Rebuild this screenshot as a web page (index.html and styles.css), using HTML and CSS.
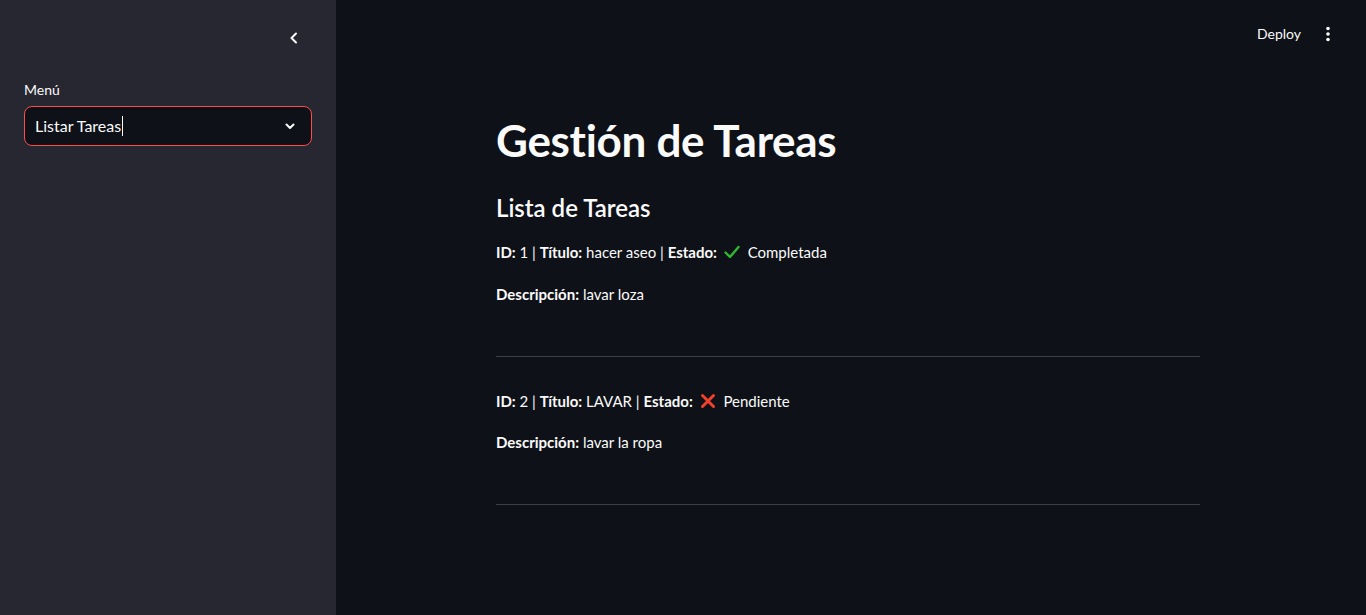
FILE: index.html
```html
<!DOCTYPE html>
<html lang="es">
<head>
<meta charset="utf-8">
<title>Gestión de Tareas</title>
<link rel="stylesheet" href="styles.css">
</head>
<body>
<div class="app">
  <aside class="sidebar">
    <div class="sidebar-top">
      <button class="collapse" aria-label="Cerrar barra lateral">
        <svg width="16" height="16" viewBox="0 0 16 16"><path d="M10 3.5 5.5 8l4.5 4.5" fill="none" stroke="#fafafa" stroke-width="2" stroke-linecap="round" stroke-linejoin="round"/></svg>
      </button>
    </div>
    <div class="field">
      <label class="field-label">Menú</label>
      <div class="select">
        <span class="select-value">Listar Tareas</span><span class="caret"></span>
        <svg class="select-arrow" width="14" height="14" viewBox="0 0 14 14"><path d="M3.5 5.5 7 9l3.5-3.5" fill="none" stroke="#fafafa" stroke-width="2" stroke-linecap="round" stroke-linejoin="round"/></svg>
      </div>
    </div>
  </aside>
  <main class="main">
    <header class="topbar">
      <span class="deploy">Deploy</span>
      <svg class="kebab" width="6" height="16" viewBox="0 0 6 16"><circle cx="3" cy="2.5" r="1.8" fill="#fafafa"/><circle cx="3" cy="8" r="1.8" fill="#fafafa"/><circle cx="3" cy="13.5" r="1.8" fill="#fafafa"/></svg>
    </header>
    <section class="content">
      <h1 class="title">Gestión de Tareas</h1>
      <h2 class="subtitle">Lista de Tareas</h2>

      <p class="line"><b>ID:</b> 1 | <b>Título:</b> hacer aseo | <b>Estado:</b> <svg class="icon" width="16" height="16" viewBox="0 0 16 16"><path d="M1.5 8.5 6 13 14.5 3" fill="none" stroke="#2fb82f" stroke-width="2.4" stroke-linecap="round" stroke-linejoin="round"/></svg> Completada</p>
      <p class="line"><b>Descripción:</b> lavar loza</p>
      <hr class="divider">

      <p class="line"><b>ID:</b> 2 | <b>Título:</b> LAVAR | <b>Estado:</b> <svg class="icon" width="16" height="16" viewBox="0 0 16 16"><path d="M2.5 2.5 13.5 13.5M13.5 2.5 2.5 13.5" fill="none" stroke="#f0412a" stroke-width="3" stroke-linecap="round"/></svg> Pendiente</p>
      <p class="line line-tight"><b>Descripción:</b> lavar la ropa</p>
      <hr class="divider">
    </section>
  </main>
</div>
</body>
</html>
```

FILE: styles.css
```css
* { box-sizing: border-box; }
html, body { margin: 0; padding: 0; height: 100%; }
body {
  font-family: Lato, "Noto Sans", "Liberation Sans", sans-serif;
  color: #fafafa;
  background: #0e1117;
  overflow: hidden;
}
.app { display: flex; height: 615px; }

.sidebar {
  width: 336px;
  flex-shrink: 0;
  background: #262730;
  padding: 0 24px;
}
.sidebar-top {
  height: 76px;
  display: flex;
  justify-content: flex-end;
  align-items: flex-start;
  padding-top: 30px;
  padding-right: 10px;
}
.collapse {
  background: none; border: 0; padding: 0; width: 16px; height: 16px;
  display: flex;
}
.field-label {
  display: block;
  font-size: 14px;
  line-height: 20px;
  height: 30px;
  padding-top: 4px;
}
.select {
  height: 40px;
  border: 1px solid #ff4b4b;
  border-radius: 8px;
  background: #0e1117;
  display: flex;
  align-items: center;
  padding: 0 14px 0 10px;
  font-size: 16px;
}
.select-value { line-height: 20px; }
.caret {
  display: inline-block;
  width: 1px; height: 20px;
  background: #fafafa;
  margin-left: 1px;
}
.select-arrow { margin-left: auto; }

.main { flex: 1; display: flex; flex-direction: column; }
.topbar {
  height: 68px;
  display: flex;
  align-items: center;
  justify-content: flex-end;
  gap: 24px;
  padding-right: 35px;
}
.deploy { font-size: 14px; line-height: 20px; }
.kebab { display: block; }

.content {
  width: 704px;
  margin-left: 160px;
  padding-top: 28px;
}
.title {
  font-size: 44px;
  font-weight: 700;
  line-height: 52px;
  margin: 0;
  padding: 18px 0 16px;
  letter-spacing: -0.3px;
}
.subtitle {
  font-size: 24px;
  font-weight: 600;
  line-height: 30px;
  margin: 11px 0 0;
  padding: 0;
}
.line {
  font-size: 15px;
  line-height: 26px;
  margin: 16px 0 0;
}
.line b { font-weight: 700; }
.line + .line { margin-top: 16px; }
.line + .line-tight { margin-top: 15px; }
.icon { vertical-align: -2px; margin: 0 4px 0 3px; }
.divider {
  border: 0;
  border-top: 1px solid #3d3f46;
  margin: 49px 0 31px;
  height: 0;
}
```
